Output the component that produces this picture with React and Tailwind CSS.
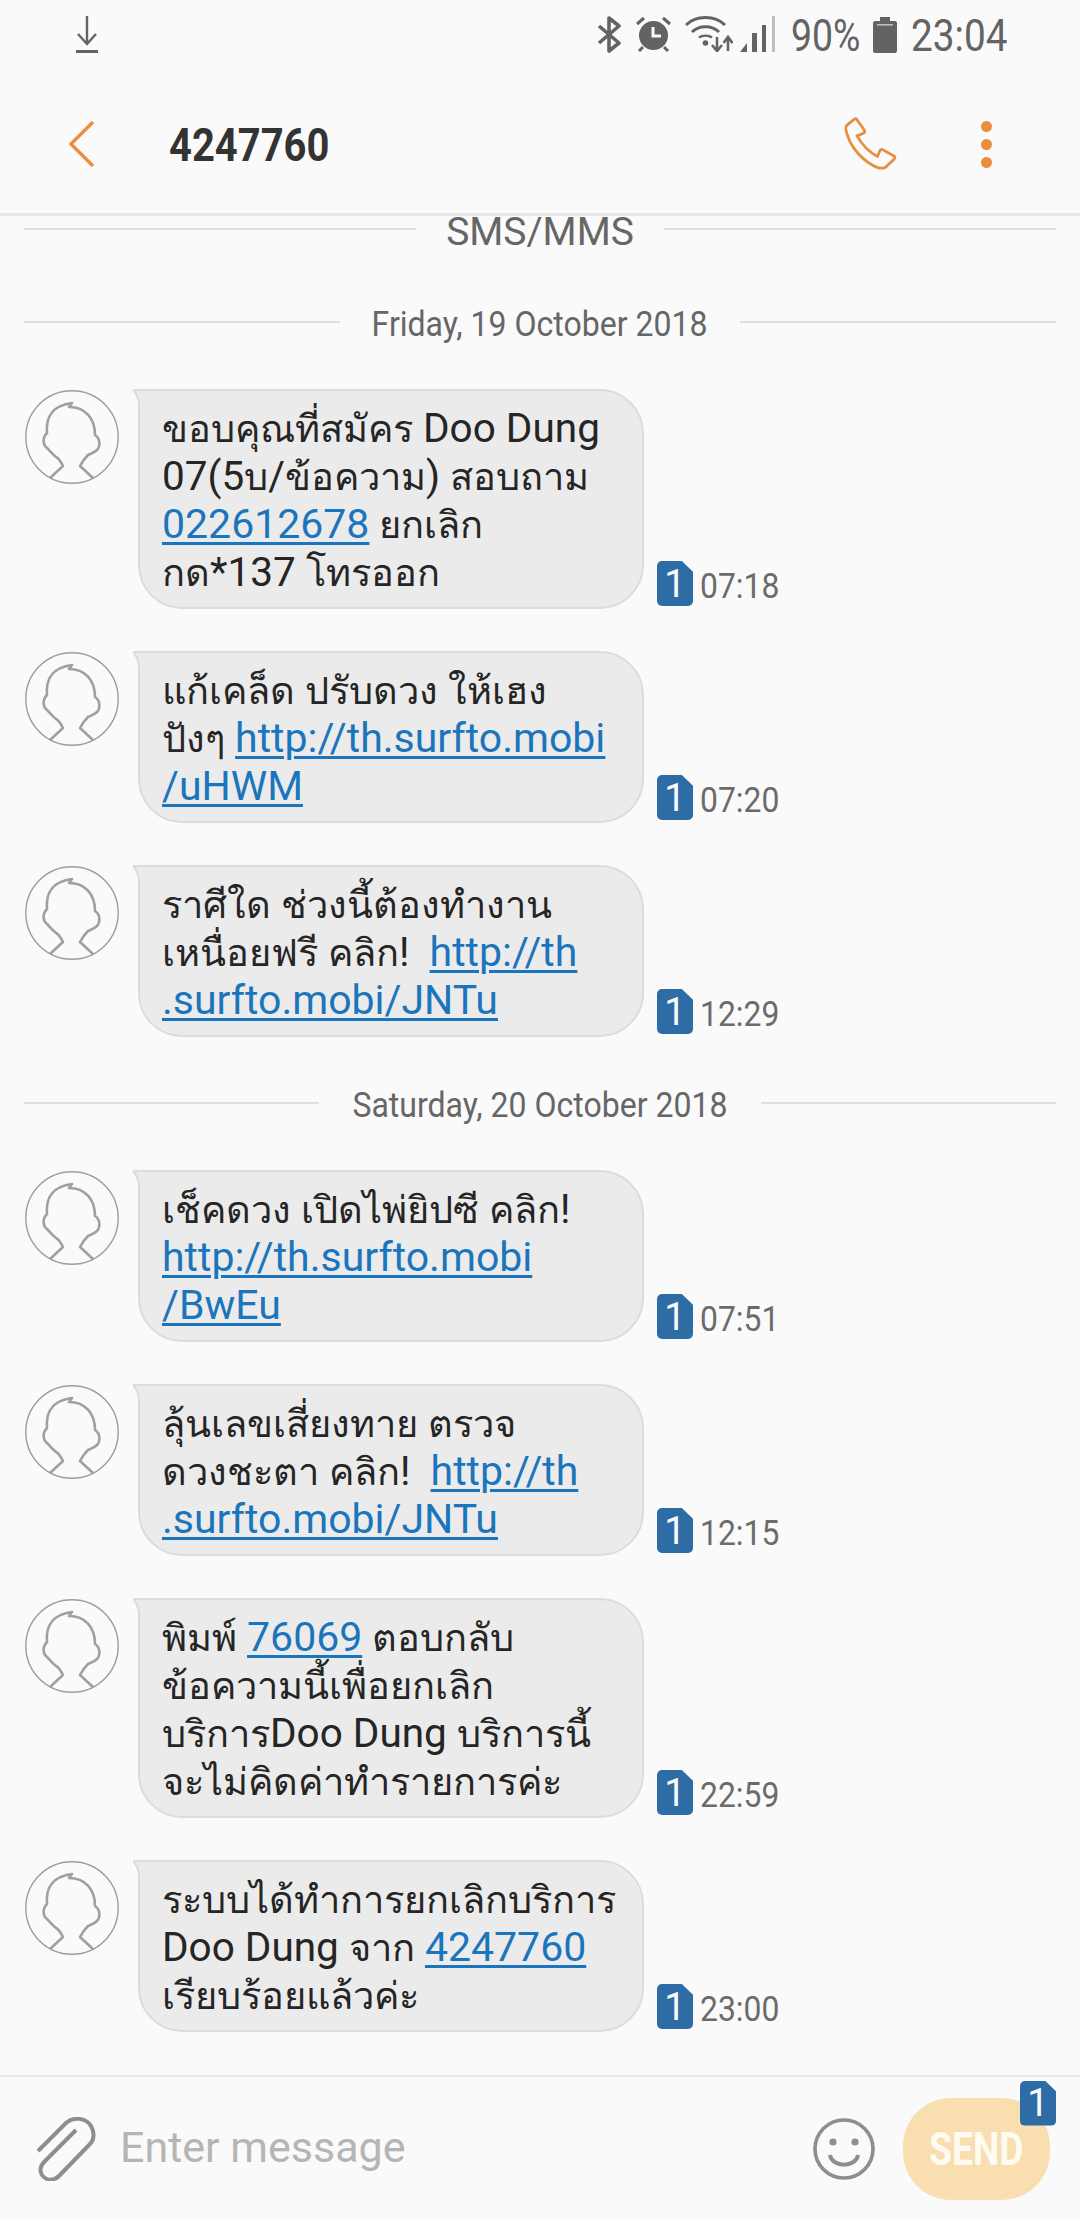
import React from 'react';

const Avatar = () => (
  <svg width="94" height="94" viewBox="0 0 94 94" fill="none" className="shrink-0 mt-[1px]">
    <circle cx="47" cy="47" r="46.2" stroke="#9c9c9c" strokeWidth="1.4" />
    <path
      d="M25 88L38 76C36 72 33 68 31 67C27 64 24 60 22 58C18 55 17 48 22 43C21 30 24 16 47 13L44 17C60 17 70 28 70 45C76 49 75 57 72 60C69 63 65 64 63 65C60 68 57 72 55 76L68 88"
      stroke="#a0a0a0"
      strokeWidth="2.6"
      strokeLinejoin="round"
    />
  </svg>
);

const Badge = ({ className = '' }) => (
  <div className={`w-[36px] h-[45px] bg-[#2e6ca6] rounded-[5px] [clip-path:polygon(0_0,69%_0,100%_24%,100%_100%,0_100%)] flex items-center justify-center text-[#fafafa] text-[38px] leading-none font-normal ${className}`}>
    1
  </div>
);

const Link = ({ children }) => (
  <a className="text-[41px] text-[#1b75bc] underline decoration-[3px] underline-offset-[4px]">{children}</a>
);

// thai runs sit a little smaller than the latin ones in the original
const Mixed = ({ text }) =>
  text.split(/([\u0E00-\u0E7F]+)/).map((part, i) =>
    /[\u0E00-\u0E7F]/.test(part) ? <span key={i} className="text-[38px]">{part}</span> : <span key={i}>{part}</span>
  );

const Message = ({ lines, time }) => (
  <div className="flex items-start pl-[25px]">
    <Avatar />
    <div className="ml-[19px] relative w-[506px] bg-[#ebebeb] border-2 border-[#dcdcdc] rounded-[44px] rounded-tl-none pt-[13px] pb-[11px] pl-[22px] text-[40.5px] leading-[48px] text-[#252525]">
      <svg width="7" height="26" viewBox="0 0 7 26" className="absolute left-[-7px] top-[-2px]">
        <path d="M0 1H7V26C7 16 5 6 0 1Z" fill="#ebebeb" />
        <path d="M7 26C7 16 5 6 0 1H7" fill="none" stroke="#dcdcdc" strokeWidth="2" />
      </svg>
      {lines.map((line, i) => (
        <div key={i} className="h-[48px] whitespace-pre">
          {typeof line === 'string' ? <Mixed text={line} /> : line}
        </div>
      ))}
    </div>
    <div className="self-end flex items-end gap-[7px] ml-[13px] mb-[3px]">
      <Badge />
      <span className="w-[78px] mb-[-1px] text-[#6b6b6b] text-[35px] leading-[40px] inline-block origin-left scale-x-[0.91]">{time}</span>
    </div>
  </div>
);

const DateLine = ({ text, className = '', textClass }) => (
  <div className={`flex items-center px-[24px] ${className}`}>
    <div className="flex-1 h-[2px] bg-[#dedede]" />
    <span className={`text-[#666] whitespace-nowrap ${textClass}`}>{text}</span>
    <div className="flex-1 h-[2px] bg-[#dedede]" />
  </div>
);

const StatusBar = () => (
  <div className="h-[70px] flex items-start pt-[16px] pl-[76px] pr-[73px] text-[#636363]">
    <svg width="22" height="37" viewBox="0 0 22 37" fill="none" stroke="#636363" strokeWidth="2.4">
      <path d="M11 0V28M2 18L11 28L20 18" />
      <path d="M0 35.5H22" strokeWidth="3" />
    </svg>
    <div className="ml-auto flex items-start">
      <svg width="24" height="37" viewBox="0 0 24 37" fill="none" stroke="#636363" strokeWidth="3.6" strokeLinejoin="round">
        <path d="M2 10L22 27L12 35V2L22 10L2 27" />
      </svg>
      <svg width="35" height="36" viewBox="0 0 35 36" className="ml-[15px]">
        <circle cx="17.5" cy="19.5" r="14.5" fill="#636363" />
        <path d="M17 11V20H25" fill="none" stroke="#fafafa" strokeWidth="3" />
        <path d="M1 8L8 2M34 8L27 2M3 35L7 31M32 35L28 31" stroke="#636363" strokeWidth="3" />
      </svg>
      <svg width="48" height="36" viewBox="0 0 48 36" fill="none" stroke="#636363" className="ml-[14px]">
        <path d="M1 9C11 -1 30 -1 40 9" strokeWidth="3" />
        <path d="M7 16C14 9 27 9 34 16" strokeWidth="3" />
        <path d="M14 21.5C17 19 24 19 27 21.5" strokeWidth="2.4" />
        <circle cx="20.5" cy="27" r="2.8" fill="#636363" stroke="none" />
        <path d="M32 21V34M27 29L32 35L37 29" strokeWidth="2.6" />
        <path d="M43 35V22M38.5 27L43 21L47.5 27" strokeWidth="2.6" />
      </svg>
      <svg width="35" height="36" viewBox="0 0 35 36" className="ml-[7px]">
        <path d="M0 36L7 27V36Z" fill="#636363" />
        <rect x="12" y="17" width="5" height="19" fill="#636363" />
        <rect x="22" y="9" width="4" height="27" fill="#636363" />
        <rect x="32" y="0" width="3" height="36" fill="#bdbdbd" />
      </svg>
      <span className="ml-[16px] w-[69px] text-[44px] leading-[40px] inline-block origin-left scale-x-[0.85]">90%</span>
      <svg width="24" height="36" viewBox="0 0 24 36" className="ml-[13px] mt-[1px]">
        <path d="M7 0H17V4H22C23 4 24 5 24 6V34C24 35 23 36 22 36H2C1 36 0 35 0 34V6C0 5 1 4 2 4H7Z" fill="#636363" />
        <rect x="4" y="7" width="16" height="1.6" fill="#bdbdbd" />
      </svg>
      <span className="ml-[14px] w-[96px] text-[44px] leading-[40px] inline-block origin-left scale-x-[0.88]">23:04</span>
    </div>
  </div>
);

const Toolbar = () => (
  <div className="h-[143px] pt-[5px] flex items-center pl-[69px] pr-[87px]">
    <svg width="25" height="46" viewBox="0 0 25 46" fill="none" stroke="#e8913f" strokeWidth="3.4">
      <path d="M24 1L2 23L24 45" />
    </svg>
    <span className="ml-[75px] mt-[2px] w-[159px] text-[47px] leading-[50px] font-bold text-[#333] inline-block origin-left scale-x-[0.85]">4247760</span>
    <svg width="56" height="56" viewBox="60 42 180 180" fill="none" stroke="#e48f42" strokeWidth="9" strokeLinejoin="round" className="ml-auto">
      <path d="M100 52L75 72C70 78 72 90 78 105C90 145 130 190 175 208C190 212 200 208 205 202L228 180C232 175 230 172 226 170L190 150C186 148 184 150 182 153L174 172C150 160 125 135 108 106L128 98C134 96 134 92 132 88L108 54C106 50 103 50 100 52Z" />
    </svg>
    <div className="ml-[83px] w-[12px] flex flex-col gap-[7px]">
      <div className="w-[11px] h-[11px] rounded-full bg-[#e88f3c]" />
      <div className="w-[11px] h-[11px] rounded-full bg-[#e88f3c]" />
      <div className="w-[11px] h-[11px] rounded-full bg-[#e88f3c]" />
    </div>
  </div>
);

const Footer = () => (
  <div className="h-[145px] shrink-0 border-t-2 border-[#e8e8e8] flex items-center pl-[36px] pr-[30px]">
    <svg width="60" height="64" viewBox="0 0 60 64" fill="none" stroke="#8e8e8e" strokeWidth="4">
      <path d="M2 34L30 6C38 -1 50 1 55 9C59 16 58 23 54 27L23 59C18 64 10 64 6 58C3 53 5 48 9 44L40 13" />
    </svg>
    <span className="ml-[24px] mb-[3px] text-[43px] leading-[50px] text-[#b5b5b5]">Enter message</span>
    <svg width="62" height="62" viewBox="0 0 62 62" fill="none" stroke="#8e8e8e" strokeWidth="3.6" className="ml-auto">
      <circle cx="31" cy="31" r="29" />
      <circle cx="20" cy="24" r="3.6" fill="#8e8e8e" stroke="none" />
      <circle cx="42" cy="24" r="3.6" fill="#8e8e8e" stroke="none" />
      <path d="M17 37C19 50 43 50 45 37" strokeWidth="4" />
    </svg>
    <div className="relative ml-[28px] w-[147px] h-[102px] rounded-[48px] bg-[#f9dfb0] flex items-center justify-center">
      <span className="text-[46px] leading-[50px] font-bold text-[#fffbf3] inline-block scale-x-[0.81] whitespace-nowrap">SEND</span>
      <Badge className="absolute right-[-6px] top-[-17px]" />
    </div>
  </div>
);

export default function App() {
  return (
    <div className="w-[1080px] h-[2220px] bg-[#fafafa] overflow-hidden flex flex-col font-['Roboto','Noto_Sans','DejaVu_Sans',sans-serif]">
      <StatusBar />
      <Toolbar />
      <div className="h-[3px] bg-[#e8e8e8]" />
      <div className="flex-1">
        <DateLine text="SMS/MMS" className="h-[26px] mb-[60px]" textClass="mx-[30px] text-[39px] leading-[38px] mt-[5px]" />
        <DateLine text="Friday, 19 October 2018" className="h-[40px] mb-[47px]" textClass="mx-[16px] mt-[6px] inline-block scale-x-[0.915] text-[35px] leading-[40px]" />
        <div className="flex flex-col gap-[42px]">
          <Message time="07:18" lines={['ขอบคุณที่สมัคร Doo Dung', '07(5บ/ข้อความ) สอบถาม', <><Link>022612678</Link> <Mixed text="ยกเลิก" /></>, 'กด*137 โทรออก']} />
          <Message time="07:20" lines={['แก้เคล็ด ปรับดวง ให้เฮง', <><Mixed text="ปังๆ " /><Link>http://th.surfto.mobi</Link></>, <Link>/uHWM</Link>]} />
          <Message time="12:29" lines={['ราศีใด ช่วงนี้ต้องทำงาน', <><Mixed text="เหนื่อยฟรี คลิก!  " /><Link>http://th</Link></>, <Link>.surfto.mobi/JNTu</Link>]} />
        </div>
        <DateLine text="Saturday, 20 October 2018" className="h-[40px] mt-[46px] mb-[47px]" textClass="mx-[16px] mt-[6px] inline-block scale-x-[0.915] text-[35px] leading-[40px]" />
        <div className="flex flex-col gap-[42px]">
          <Message time="07:51" lines={['เช็คดวง เปิดไพ่ยิปซี คลิก!', <Link>http://th.surfto.mobi</Link>, <Link>/BwEu</Link>]} />
          <Message time="12:15" lines={['ลุ้นเลขเสี่ยงทาย ตรวจ', <><Mixed text="ดวงชะตา คลิก!  " /><Link>http://th</Link></>, <Link>.surfto.mobi/JNTu</Link>]} />
          <Message time="22:59" lines={[<><Mixed text="พิมพ์ " /><Link>76069</Link> <Mixed text="ตอบกลับ" /></>, 'ข้อความนี้เพื่อยกเลิก', 'บริการDoo Dung บริการนี้', 'จะไม่คิดค่าทำรายการค่ะ']} />
          <Message time="23:00" lines={['ระบบได้ทำการยกเลิกบริการ', <><Mixed text="Doo Dung จาก " /><Link>4247760</Link></>, 'เรียบร้อยแล้วค่ะ']} />
        </div>
      </div>
      <Footer />
    </div>
  );
}
